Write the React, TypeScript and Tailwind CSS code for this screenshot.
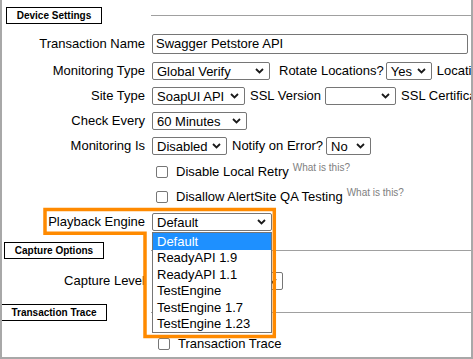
import React from 'react';

type SelProps = {
	value: string;
	width: string;
	className?: string;
};

// fake native select: bordered box with a chevron on the right
function Sel({ value, width, className = '' }: SelProps) {
	return (
		<div className={`flex h-[18px] shrink-0 items-center justify-between rounded-[2px] border border-[#767676] bg-white pl-[4px] pr-[5px] ${width} ${className}`}>
			<span className="leading-none">{value}</span>
			<svg width="9" height="6" viewBox="0 0 9 6" className="shrink-0">
				<path d="M1 1l3.5 3.5L8 1" fill="none" stroke="#1a1a1a" strokeWidth="1.8" />
			</svg>
		</div>
	);
}

function Check() {
	return <div className="h-[12px] w-[12px] shrink-0 rounded-[2px] border border-[#767676] bg-white" />;
}

function Header({ title, width, offset }: { title: string; width: string; offset: string }) {
	return (
		<div className="flex h-[17px] items-center">
			<div className="w-[149px] shrink-0">
				<div className={`flex h-[17px] items-center justify-center border border-black bg-white text-[10px] font-bold ${width} ${offset}`}>
					{title}
				</div>
			</div>
			<div className="h-px flex-1 bg-[#a0a0a0]" />
		</div>
	);
}

function Row({ label, className = '', children }: { label?: string; className?: string; children: React.ReactNode }) {
	return (
		<div className={`flex h-[18px] items-center whitespace-nowrap ${className}`}>
			<div className="w-[143px] shrink-0 text-right">{label}</div>
			<div className="ml-[7px] flex items-center">{children}</div>
		</div>
	);
}

const engines = ['Default', 'ReadyAPI 1.9', 'ReadyAPI 1.1', 'TestEngine', 'TestEngine 1.7', 'TestEngine 1.23'];

export default function App() {
	return (
		<div className="relative h-[359px] w-[473px] overflow-hidden border-x-2 border-b-2 border-[#a8a8a8] bg-white pt-[7px] font-['Liberation_Sans',Arial,sans-serif] text-[13px] text-black">
			<Header title="Device Settings" width="w-[96px]" offset="ml-[4px]" />

			<Row label="Transaction Name" className="mt-[10px] h-[20px]">
				<div className="flex h-[20px] w-[316px] items-center rounded-[2px] border border-[#767676] pl-[3px]">
					Swagger Petstore API
				</div>
			</Row>

			<Row label="Monitoring Type" className="mt-[8px]">
				<Sel value="Global Verify" width="w-[118px]" />
				<span className="ml-[9px]">Rotate Locations?</span>
				<Sel value="Yes" width="w-[46px]" className="ml-[2px]" />
				<span className="ml-[5px]">Location Rotation</span>
			</Row>

			<Row label="Site Type" className="mt-[7px]">
				<Sel value="SoapUI API" width="w-[93px]" />
				<span className="ml-[5px]">SSL Version</span>
				<Sel value="" width="w-[71px]" className="ml-[4px]" />
				<span className="ml-[5px]">SSL Certificate</span>
			</Row>

			<Row label="Check Every" className="mt-[7px]">
				<Sel value="60 Minutes" width="w-[95px]" />
			</Row>

			<Row label="Monitoring Is" className="mt-[7px]">
				<Sel value="Disabled" width="w-[75px]" />
				<span className="ml-[5px]">Notify on Error?</span>
				<Sel value="No" width="w-[45px]" className="ml-[3px]" />
			</Row>

			<Row className="mt-[8px]">
				<div className="ml-[4px]"><Check /></div>
				<span className="ml-[8px]">Disable Local Retry</span>
				<span className="relative -top-[5px] ml-[4px] text-[10px] text-[#808080]">What is this?</span>
			</Row>

			<Row className="mt-[7px]">
				<div className="ml-[4px]"><Check /></div>
				<span className="ml-[8px]">Disallow AlertSite QA Testing</span>
				<span className="relative -top-[5px] ml-[4px] text-[10px] text-[#808080]">What is this?</span>
			</Row>

			<Row label="Playback Engine" className="mt-[7px]">
				<Sel value="Default" width="w-[120px]" />
			</Row>

			<div className="mt-[11px]">
				<Header title="Capture Options" width="w-[100px]" offset="ml-[2px]" />
			</div>

			<Row label="Capture Level" className="mt-[13px]">
				<Sel value="" width="w-[131px]" className="pr-[3px]" />
			</Row>

			<div className="mt-[14px]">
				<Header title="Transaction Trace" width="w-[106px]" offset="-ml-px" />
			</div>

			<Row className="mt-[14px]">
				<div className="ml-[6px]"><Check /></div>
				<span className="ml-[8px]">Transaction Trace</span>
			</Row>

			{/* open dropdown list of the playback engine select */}
			<div className="absolute left-[150px] top-[232px] z-10 w-[120px] border border-[#767676] bg-white">
				{engines.map((e, i) => (
					<div
						key={e}
						className={`flex h-[16.5px] items-center pl-[4px] ${i == 0 ? 'bg-[#1e90ff] text-white' : ''}`}
					>
						{e}
					</div>
				))}
			</div>

			{/* orange highlight drawn around the playback engine */}
			<svg className="pointer-events-none absolute left-0 top-0 z-20" width="473" height="359">
				<path
					d="M43 209.5H272.3V336.5H143V233.3H43Z"
					fill="none"
					stroke="#ff8a00"
					strokeWidth="3.5"
				/>
			</svg>
		</div>
	);
}
